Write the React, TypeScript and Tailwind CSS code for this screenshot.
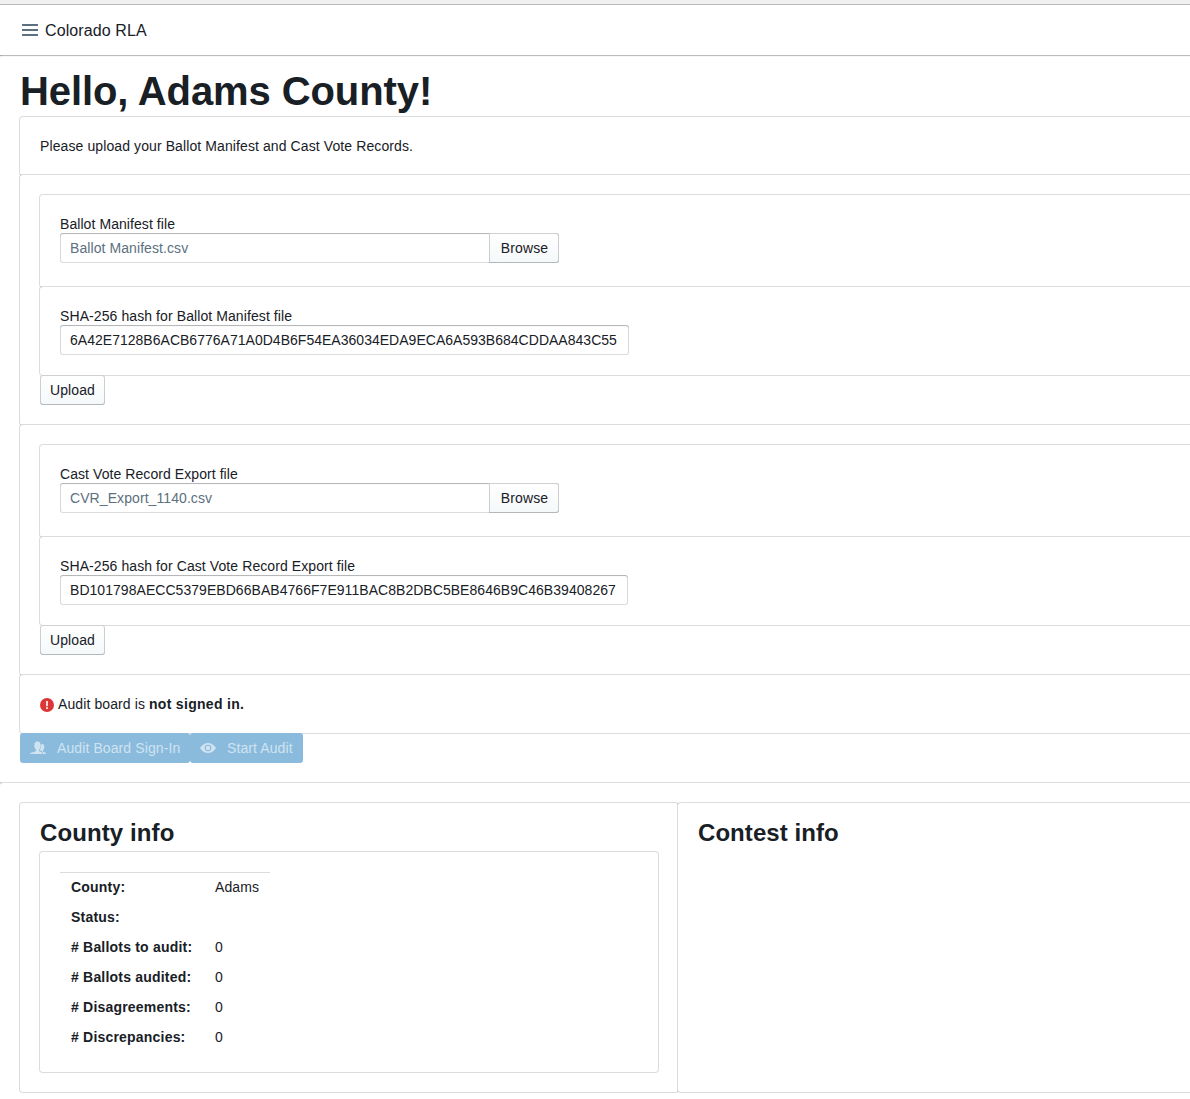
import type { ReactNode } from 'react';

const cardStyle = 'rounded-[3px] bg-white shadow-[0_0_0_1px_rgba(16,22,26,0.15)]';
const buttonStyle =
  'h-[30px] rounded-[3px] bg-linear-to-b from-white to-[#f5f8fa] px-[10px] leading-[30px] shadow-[inset_0_0_0_1px_rgba(16,22,26,0.2),inset_0_-1px_0_rgba(16,22,26,0.1)]';
const inputShadow =
  'shadow-[inset_0_0_0_1px_rgba(16,22,26,0.15),inset_0_1px_1px_rgba(16,22,26,0.2)]';

function Card({ children, className = '' }: { children?: ReactNode; className?: string }) {
  return <div className={`${cardStyle} p-5 ${className}`}>{children}</div>;
}

interface UploadFormProps {
  name: string;
  file: string;
  hash: string;
  hashStyle: string;
}

function UploadForm({ name, file, hash, hashStyle }: UploadFormProps) {
  return (
    <Card>
      <Card className="pb-6">
        <div className="tracking-[0.07px]">{name}</div>
        <div className={`flex h-[30px] w-[499px] rounded-[3px] pl-[10px] leading-[30px] text-[#5c7080] ${inputShadow}`}>
          <span className="grow tracking-[0.08px]">{file}</span>
          <button className="h-[30px] w-[70px] rounded-r-[3px] bg-linear-to-b from-white to-[#f5f8fa] pl-px text-[#182026] shadow-[inset_0_0_0_1px_rgba(16,22,26,0.2),inset_0_-1px_0_rgba(16,22,26,0.1)]">
            Browse
          </button>
        </div>
      </Card>
      <Card>
        <div className="tracking-[0.09px]">SHA-256 hash for {name}</div>
        <div className={`h-[30px] rounded-[3px] px-[10px] leading-[30px] ${inputShadow} ${hashStyle}`}>{hash}</div>
      </Card>
      <button className={`relative block w-[65px] ${buttonStyle}`}>Upload</button>
    </Card>
  );
}

const rows = [
  ['County:', 'Adams'],
  ['Status:', ''],
  ['# Ballots to audit:', '0'],
  ['# Ballots audited:', '0'],
  ['# Disagreements:', '0'],
  ['# Discrepancies:', '0'],
];

export default function App() {
  return (
    <div className="h-[1099px] w-full overflow-hidden bg-white font-['Liberation_Sans',sans-serif] text-[14px] leading-[18px] tracking-[0.1px] text-[#182026]">
      <div className="w-[1336px]">
        <div className="h-[5px] border-b border-[#d0d0d0] bg-[#f0f0f0]" />
        <nav className="relative z-10 flex h-[50px] items-center bg-white pl-[22px] text-[16px] shadow-[0_0_0_1px_rgba(16,22,26,0.1),0_1px_1px_rgba(16,22,26,0.2)]">
          <svg width="16" height="16" viewBox="0 0 16 16" fill="#5c7080" className="mr-[7px]">
            <rect y="2" width="16" height="2" rx=".3" />
            <rect y="7" width="16" height="2" rx=".3" />
            <rect y="12" width="16" height="2" rx=".3" />
          </svg>
          <span className="pt-[2px]">Colorado RLA</span>
        </nav>
        <div className={`h-[728px] px-5 pt-3 ${cardStyle}`}>
          <h1 className="h-[50px] text-[40px] leading-[48px] font-bold tracking-[-0.1px]">Hello, Adams County!</h1>
          <Card>Please upload your Ballot Manifest and Cast Vote Records.</Card>
          <UploadForm
            name="Ballot Manifest file"
            file="Ballot Manifest.csv"
            hash="6A42E7128B6ACB6776A71A0D4B6F54EA36034EDA9ECA6A593B684CDDAA843C55"
            hashStyle="w-[569px] tracking-[0.02px]"
          />
          <UploadForm
            name="Cast Vote Record Export file"
            file="CVR_Export_1140.csv"
            hash="BD101798AECC5379EBD66BAB4766F7E911BAC8B2DBC5BE8646B9C46B39408267"
            hashStyle="w-[568px] tracking-[0.045px]"
          />
          <Card className="flex items-center">
            <svg width="14" height="14" viewBox="0 0 14 14" className="mt-[2px] mr-1">
              <circle cx="7" cy="7" r="7" fill="#db3737" />
              <path d="M6 3h2v5.200H6zM6 9.200h2v1.800H6z" fill="#f8d7d7" />
            </svg>
            <span className="whitespace-pre">
              Audit board is <b className="tracking-[0.3px]">not signed in.</b>
            </span>
          </Card>
          <div className="relative flex text-[#cfe3f0]">
            <button className="flex h-[30px] w-[170px] items-center rounded-[3px] bg-[#8abbdd] pl-[10px]">
              <svg width="16" height="16" viewBox="0 0 16 16" fill="currentColor" className="mr-[11px]">
                <path d="M11.200 12c-.9-.4-2.400-.6-2.400-1.600 0-.6.700-1 1-1.800.3-.3.400-.7.500-1.200.3-.2.500-.6.500-1.100 0-.3-.1-.6-.3-.8.300-2.200-.6-4-3-4s-3.300 1.800-3 4c-.2.200-.3.500-.3.800 0 .5.200.9.500 1.100.1.500.2.900.5 1.200.3.800 1 1.200 1 1.800 0 1-1.700 1.200-2.600 1.600C1.300 12.600 0 13 0 14h12.200c0-.8-.2-1.600-1-2z" />
                <path d="M14.500 12.300c-.8-.3-1.800-.6-1.800-1.300 0-.5.500-.8.800-1.500.3-.3.400-.6.500-1 .2-.2.400-.5.400-.9 0-.3-.1-.5-.2-.7.200-1.700-.5-2.900-1.900-2.900-.5 0-.8.100-1.100.3 0 .5 0 1-.1 1.500.2.800 0 1.500-.5 2.100-.1.500-.3.900-.6 1.200-.2.400-.5.700-.5.900.2.400 1.800.6 2.400 1.200.6.600.9 1.700.9 2.800H16c0-.9-.4-1.400-1.500-1.700z" />
              </svg>
              Audit Board Sign-In
            </button>
            <button className="flex h-[30px] w-[113px] items-center rounded-[3px] bg-[#8abbdd] pl-[10px]">
              <svg width="16" height="16" viewBox="0 0 16 16" fill="currentColor" className="mr-[11px]">
                <path fillRule="evenodd" d="M0 8c1.800-3 4.700-5 8-5s6.200 2 8 5c-1.800 3-4.700 5-8 5S1.800 11 0 8zM8 4.700a3.300 3.300 0 1 0 0 6.600 3.300 3.300 0 0 0 0-6.600z" />
                <path fillRule="evenodd" d="M8 5.800a2.200 2.200 0 1 0 0 4.400 2.200 2.200 0 0 0 0-4.400z" />
              </svg>
              Start Audit
            </button>
          </div>
        </div>
        <div className={`flex p-5 ${cardStyle}`}>
          <Card className="h-[289px] w-[658px] shrink-0">
            <h2 className="h-[29px] text-[24px] leading-[20px] font-bold">County info</h2>
            <Card className="h-[220px]">
              <table className="w-[210px] border-collapse">
                <tbody>
                  {rows.map(([label, value]) => (
                    <tr key={label} className="h-[30px] first:shadow-[inset_0_1px_0_rgba(16,22,26,0.15)]">
                      <td className="w-[144px] pl-[11px] font-bold tracking-[0.2px]">{label}</td>
                      <td className="pl-[11px]">{value}</td>
                    </tr>
                  ))}
                </tbody>
              </table>
            </Card>
          </Card>
          <Card className="h-[289px] w-[638px] shrink-0">
            <h2 className="text-[24px] leading-[20px] font-bold tracking-[0.06px]">Contest info</h2>
          </Card>
        </div>
      </div>
    </div>
  );
}
